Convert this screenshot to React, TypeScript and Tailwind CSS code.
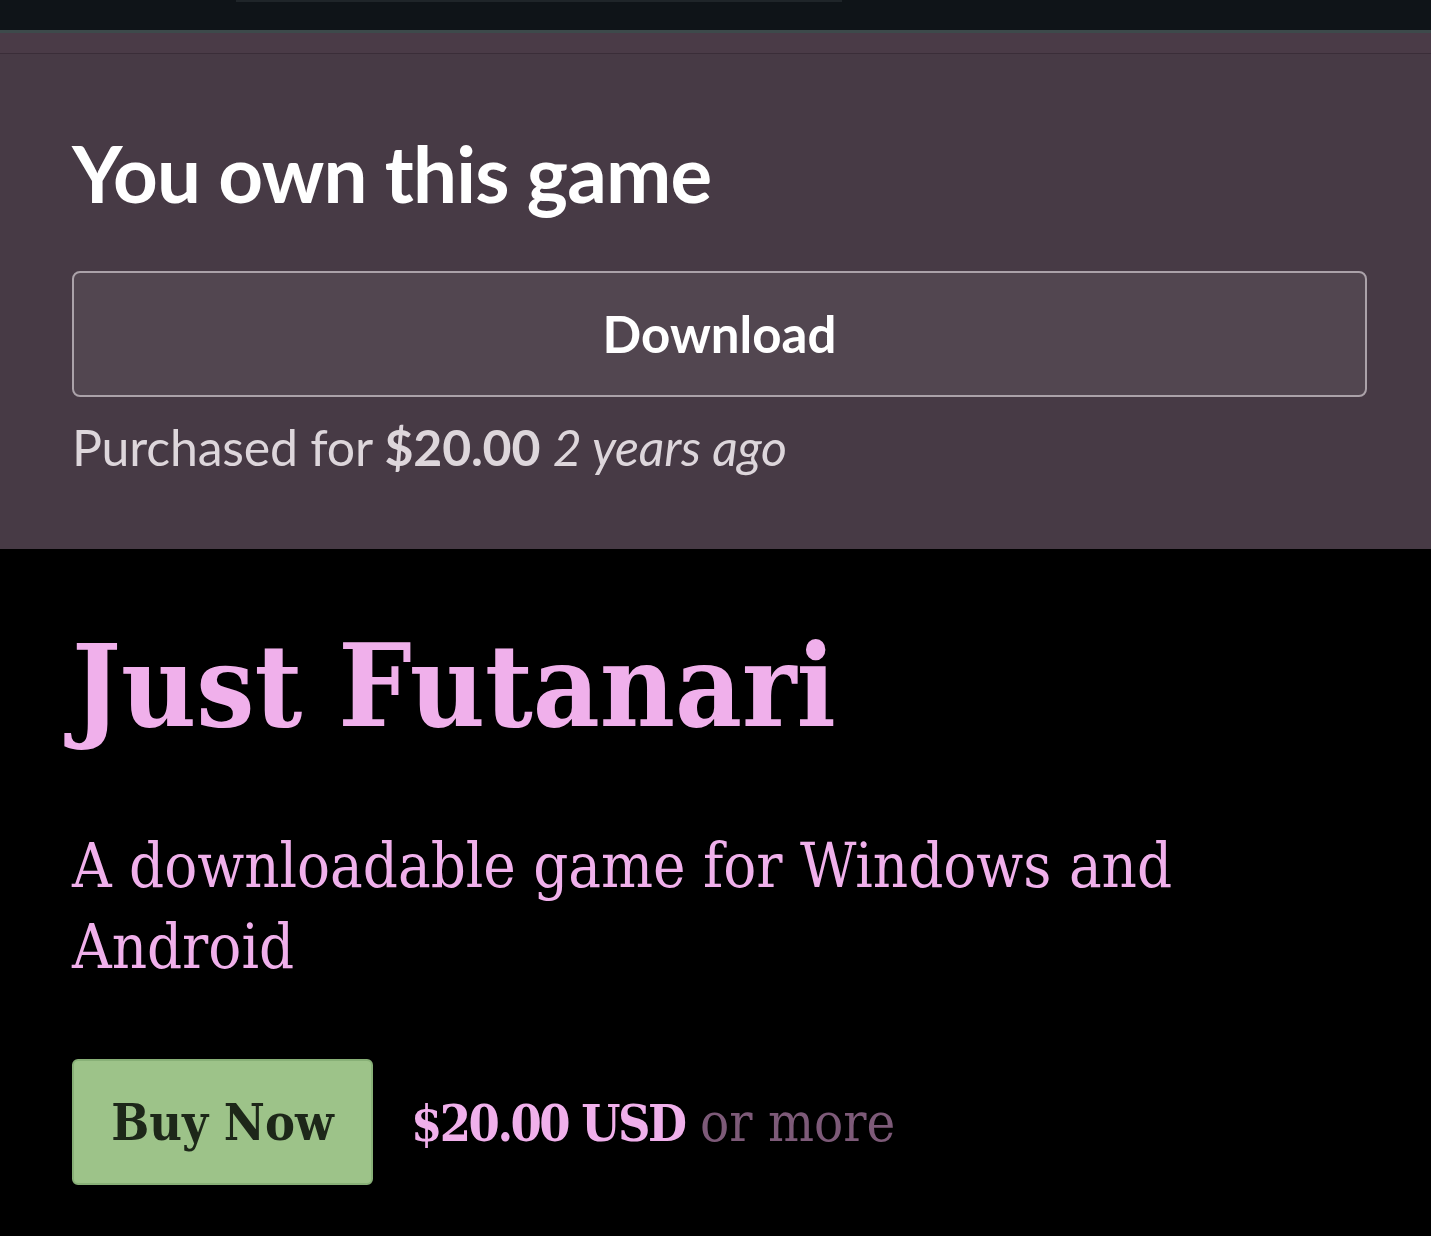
export default function App() {
  const sans = { fontFamily: "Lato, 'Open Sans', sans-serif" };
  const serif = { fontFamily: "'DejaVu Serif Condensed', 'DejaVu Serif', serif" };
  return (
    <div className="min-h-[1236px] bg-black">
      <div className="h-[30px] bg-[#0f1418] relative">
        <div className="absolute left-[236px] top-0 w-[606px] h-[2px] bg-[#1f2529]" />
      </div>
      <div className="h-[3px] bg-[#3d4a4b]" />
      <div className="h-[21px] bg-[#4a3b47] border-b border-[#3a2d38]" />
      <section className="bg-[#473a45] pl-[72px] pr-[64px] pt-[80px] pb-[71px]" style={sans}>
        <h1 className="text-white font-bold text-[78px] leading-none tracking-[-0.8px]">You own this game</h1>
        <button className="mt-[59px] w-full h-[126px] rounded-[8px] border-2 border-[#aba2a9] bg-[#524650] text-white font-bold text-[51px]">
          Download
        </button>
        <p className="mt-[19px] text-[#ddd6db] text-[50px] leading-[62px] tracking-[-0.2px]">
          Purchased for <span className="font-bold">$20.00</span> <em>2 years ago</em>
        </p>
      </section>
      <section className="px-[72px] pt-[72px]" style={serif}>
        <h2 className="text-[#f0b0eb] font-bold text-[115px] leading-[130px]">Just Futanari</h2>
        <p className="mt-[74px] text-[#f0b0eb] text-[61px] leading-[81px]">
          A downloadable game for Windows and Android
        </p>
        <div className="mt-[72px] flex items-center gap-[38px]">
          <button className="w-[301px] h-[126px] rounded-[6px] border-2 border-[#88b077] bg-[#9dc389] text-[#1d2719] font-bold text-[50px]">
            Buy Now
          </button>
          <div className="text-[54px]">
            <span className="font-bold text-[50px] tracking-[-2.5px] text-[#f0b0eb]">$20.00 USD</span>{" "}
            <span className="text-[#7d5a78]">or more</span>
          </div>
        </div>
      </section>
    </div>
  );
}
